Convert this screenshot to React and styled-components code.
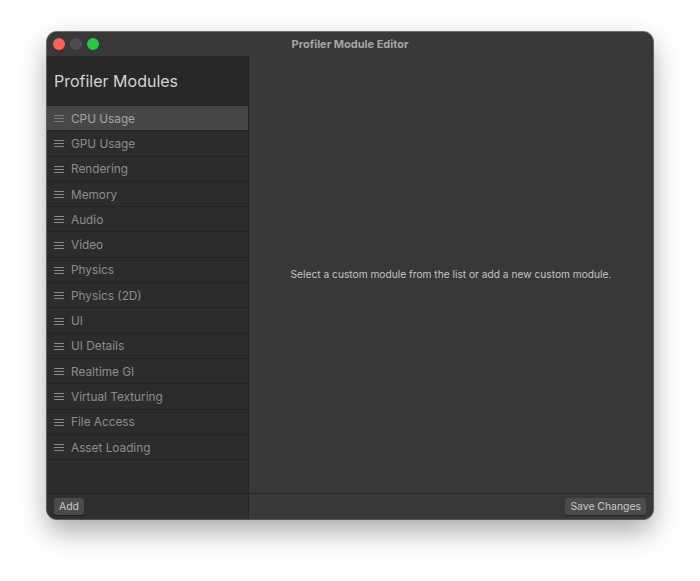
import React from "react";
import styled, { createGlobalStyle } from "styled-components";

const GlobalStyle = createGlobalStyle`
  html, body {
    margin: 0;
    padding: 0;
    background: #ffffff;
    font-family: Inter, "Liberation Sans", Arial, sans-serif;
  }
`;

const Page = styled.div`
  display: flex;
  justify-content: center;
  padding-top: 32px;
  height: 581px;
  box-sizing: border-box;
`;

const Window = styled.div`
  width: 606px;
  height: 487px;
  border-radius: 10px;
  background: #383838;
  box-shadow: 0 12px 28px rgba(0, 0, 0, 0.35), 0 0 0 1px rgba(0, 0, 0, 0.55);
  display: flex;
  flex-direction: column;
  overflow: hidden;
`;

const TitleBar = styled.div`
  position: relative;
  height: 24px;
  flex: none;
  background: #383838;
  display: flex;
  align-items: center;
  justify-content: center;
  font-size: 11px;
  font-weight: 700;
  color: #a6a6a6;
`;

const Lights = styled.div`
  position: absolute;
  left: 6px;
  top: 6px;
  display: flex;
  gap: 5px;
`;

const Light = styled.span`
  width: 12px;
  height: 12px;
  border-radius: 50%;
  background: ${({ $c }) => $c};
`;

const Body = styled.div`
  flex: 1;
  display: flex;
  min-height: 0;
`;

const Sidebar = styled.div`
  width: 201px;
  flex: none;
  display: flex;
  flex-direction: column;
  background: #2c2c2c;
  border-right: 1px solid #232323;
`;

const SideHeader = styled.div`
  height: 50px;
  flex: none;
  background: #282828;
  border-bottom: 1px solid #232323;
  display: flex;
  align-items: center;
  padding-left: 7px;
  box-sizing: border-box;
  font-size: 16px;
  color: #d4d4d4;
`;

const List = styled.div`
  flex: 1;
  display: flex;
  flex-direction: column;
`;

const Row = styled.div`
  height: 25.3px;
  flex: none;
  box-sizing: border-box;
  border-bottom: 1px solid #242424;
  background: ${({ $active }) => ($active ? "#474747" : "#2c2c2c")};
  display: flex;
  align-items: center;
  gap: 7px;
  padding: 1px 0 0 7px;
  font-size: 11.8px;
  color: ${({ $active }) => ($active ? "#a3a3a3" : "#8d8d8d")};
`;

const Grip = styled.span`
  width: 10px;
  height: 7px;
  display: flex;
  flex-direction: column;
  justify-content: space-between;
  & > i {
    display: block;
    height: 1px;
    background: ${({ $active }) => ($active ? "#7a7a7a" : "#8a8a8a")};
  }
`;

const Footer = styled.div`
  height: 26px;
  flex: none;
  box-sizing: border-box;
  border-top: 1px solid #242424;
  background: ${({ $side }) => ($side ? "#2f2f2f" : "#383838")};
  display: flex;
  align-items: center;
  justify-content: ${({ $side }) => ($side ? "flex-start" : "flex-end")};
  padding: 0 7px;
`;

const Button = styled.button`
  height: 17px;
  padding: 0 5px;
  border: none;
  border-radius: 3px;
  background: #4b4b4b;
  color: #c8c8c8;
  font-family: inherit;
  font-size: 10.4px;
  line-height: 17px;
  box-shadow: 0 1px 0 rgba(0, 0, 0, 0.35);
`;

const Main = styled.div`
  flex: 1;
  display: flex;
  flex-direction: column;
  background: #383838;
`;

const Message = styled.div`
  flex: 1;
  display: flex;
  align-items: center;
  justify-content: center;
  padding-bottom: 1px;
  font-size: 10.2px;
  color: #c4c4c4;
`;

const modules = [
  "CPU Usage",
  "GPU Usage",
  "Rendering",
  "Memory",
  "Audio",
  "Video",
  "Physics",
  "Physics (2D)",
  "UI",
  "UI Details",
  "Realtime GI",
  "Virtual Texturing",
  "File Access",
  "Asset Loading",
];

export default function App() {
  return (
    <Page>
      <GlobalStyle />
      <Window>
        <TitleBar>
          <Lights>
            <Light $c="#fe5f57" />
            <Light $c="#4d4d4d" />
            <Light $c="#28c840" />
          </Lights>
          Profiler Module Editor
        </TitleBar>
        <Body>
          <Sidebar>
            <SideHeader>Profiler Modules</SideHeader>
            <List>
              {modules.map((m, i) => (
                <Row key={m} $active={i === 0}>
                  <Grip $active={i === 0}>
                    <i />
                    <i />
                    <i />
                  </Grip>
                  {m}
                </Row>
              ))}
            </List>
            <Footer $side>
              <Button>Add</Button>
            </Footer>
          </Sidebar>
          <Main>
            <Message>
              Select a custom module from the list or add a new custom module.
            </Message>
            <Footer>
              <Button>Save Changes</Button>
            </Footer>
          </Main>
        </Body>
      </Window>
    </Page>
  );
}
